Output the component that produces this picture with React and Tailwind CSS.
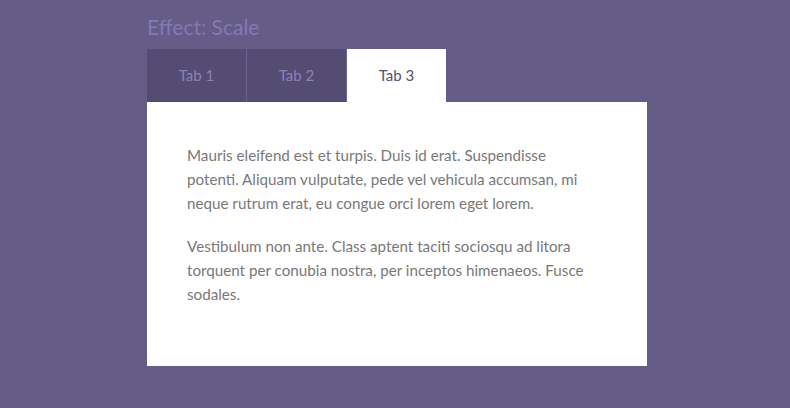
const tabs = ["Tab 1", "Tab 2", "Tab 3"];

export default function App() {
  const active = 2;
  return (
    <div className="min-h-[408px] w-full bg-[#655c88] font-['Lato','Open_Sans',sans-serif]">
      <div className="ml-[147px] w-[500px] pt-[16px]">
        <h2 className="text-[21px] leading-[22px] text-[#8379b4] mb-[11px]">Effect: Scale</h2>
        <div className="flex">
          {tabs.map((t, i) => (
            <div
              key={t}
              className={
                i === active
                  ? "w-[99px] h-[53px] flex items-center justify-center bg-white text-[15px] text-[#535070]"
                  : "w-[99px] h-[53px] flex items-center justify-center bg-[#544c73] text-[15px] text-[#8b82b8] border-r border-[#6b6391] box-content"
              }
            >
              {t}
            </div>
          ))}
        </div>
        <div className="bg-white h-[264px] px-[40px] pt-[41px] text-[15.2px] leading-[24px] text-[#787878]">
          <p className="mb-[19px] max-w-[412px]">
            Mauris eleifend est et turpis. Duis id erat. Suspendisse potenti. Aliquam vulputate, pede vel vehicula accumsan, mi neque rutrum erat, eu congue orci lorem eget lorem.
          </p>
          <p className="max-w-[412px]">
            Vestibulum non ante. Class aptent taciti sociosqu ad litora torquent per conubia nostra, per inceptos himenaeos. Fusce sodales.
          </p>
        </div>
      </div>
    </div>
  );
}
